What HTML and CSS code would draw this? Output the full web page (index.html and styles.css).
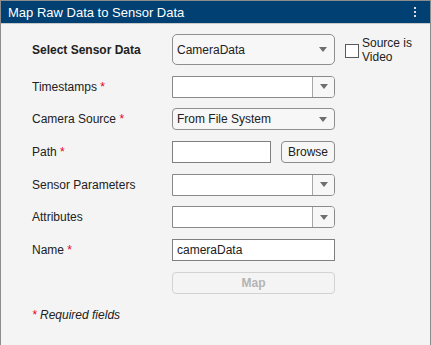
FILE: index.html
```html
<!DOCTYPE html>
<html lang="en">
<head>
  <meta charset="UTF-8" />
  <title>Map Raw Data to Sensor Data</title>
  <link rel="stylesheet" href="styles.css">
</head>
<body>

  <div class="panel">
    <div class="titlebar">
      <span class="title">Map Raw Data to Sensor Data</span>
      <svg class="kebab" width="4" height="12" viewBox="0 0 4 12">
        <rect x="1" y="0" width="2" height="2" fill="#d8dee6"/>
        <rect x="1" y="4" width="2" height="2" fill="#d8dee6"/>
        <rect x="1" y="8" width="2" height="2" fill="#d8dee6"/>
      </svg>
    </div>

    <div class="form">
      <div class="label bold">Select Sensor Data</div>
      <div class="dropdown tall"><span>CameraData</span><i class="arrow"></i></div>
      <label class="check">
        <span class="box"></span>
        <span class="check-text">Source is<br>Video</span>
      </label>

      <div class="label">Timestamps <span class="req">*</span></div>
      <div class="combo"><span class="combo-field"></span><span class="combo-btn"><i class="arrow"></i></span></div>
      <div></div>

      <div class="label">Camera Source <span class="req">*</span></div>
      <div class="dropdown"><span>From File System</span><i class="arrow"></i></div>
      <div></div>

      <div class="label">Path <span class="req">*</span></div>
      <div class="path-row">
        <span class="edit path-edit"></span>
        <button class="btn">Browse</button>
      </div>
      <div></div>

      <div class="label">Sensor Parameters</div>
      <div class="combo"><span class="combo-field"></span><span class="combo-btn"><i class="arrow"></i></span></div>
      <div></div>

      <div class="label">Attributes</div>
      <div class="combo"><span class="combo-field"></span><span class="combo-btn"><i class="arrow"></i></span></div>
      <div></div>

      <div class="label">Name <span class="req">*</span></div>
      <div class="edit">cameraData</div>
      <div></div>

      <div></div>
      <button class="btn map" disabled>Map</button>
      <div></div>
    </div>

    <p class="note"><span class="req">*</span> Required fields</p>
  </div>

</body>
</html>
```

FILE: styles.css
```css
body {
  margin: 0;
  font-family: 'Liberation Sans', Arial, sans-serif;
  font-size: 12px;
  color: #212121;
  background-color: #f4f4f4;
  overflow: hidden;
}

.panel {
  height: 345px;
  box-sizing: border-box;
  border: 1px solid #8c8c8c;
  border-bottom: none;
  background-color: #f4f4f4;
}

.titlebar {
  height: 22px;
  background-color: #004072;
  display: flex;
  align-items: center;
  justify-content: space-between;
  padding: 0 13px 0 7px;
  border-bottom: 1px solid #c8c8c8;
}

.title {
  color: #fff;
  font-size: 13px;
  padding-top: 1px;
}

.kebab {
  margin-top: 1px;
}

.form {
  display: grid;
  grid-template-columns: 140px 163px auto;
  grid-template-rows: 31px repeat(7, 22px);
  row-gap: 10.67px;
  padding: 10px 0 0 31px;
}

.label {
  display: flex;
  align-items: center;
  white-space: pre;
}

.bold {
  font-weight: bold;
}

.req {
  color: #e6001e;
}

.dropdown {
  display: flex;
  align-items: center;
  justify-content: space-between;
  border: 1px solid #8f8f8f;
  border-radius: 4px;
  background-color: #f7f7f7;
  padding: 0 7px 0 4px;
}

.dropdown.tall {
  border-radius: 5px;
}

.arrow {
  width: 0;
  height: 0;
  border-left: 4px solid transparent;
  border-right: 4px solid transparent;
  border-top: 5px solid #6e6e6e;
}

.combo {
  display: flex;
  border: 1px solid #8a8a8a;
  border-radius: 0 4px 4px 0;
  overflow: hidden;
}

.combo-field {
  flex: 1;
  background-color: #fff;
  border-right: 1px solid #a6a6a6;
}

.combo-btn {
  width: 21px;
  display: flex;
  align-items: center;
  justify-content: center;
  background-color: #f7f7f7;
}

.edit {
  display: flex;
  align-items: center;
  border: 1px solid #7f7f7f;
  background-color: #fff;
  padding: 0 4px;
}

.path-row {
  display: flex;
  justify-content: space-between;
}

.path-edit {
  width: 89px;
}

.btn {
  font-family: inherit;
  font-size: 12px;
  color: #212121;
  background-color: #f7f7f7;
  border: 1px solid #8c8c8c;
  border-radius: 4px;
  padding: 0;
  width: 54px;
}

.btn.map {
  width: auto;
  font-weight: bold;
  color: #b4b4b4;
  border-color: #d2d2d2;
  background-color: #f4f4f4;
}

.check {
  display: flex;
  align-items: center;
  margin-left: 10px;
}

.box {
  width: 12px;
  height: 12px;
  border: 1px solid #5a5a5a;
  background-color: #fff;
  margin: 3px 3px 0 0;
}

.check-text {
  line-height: 14px;
}

.note {
  margin: 14px 0 0 31px;
  font-style: italic;
  line-height: 14px;
}
```
